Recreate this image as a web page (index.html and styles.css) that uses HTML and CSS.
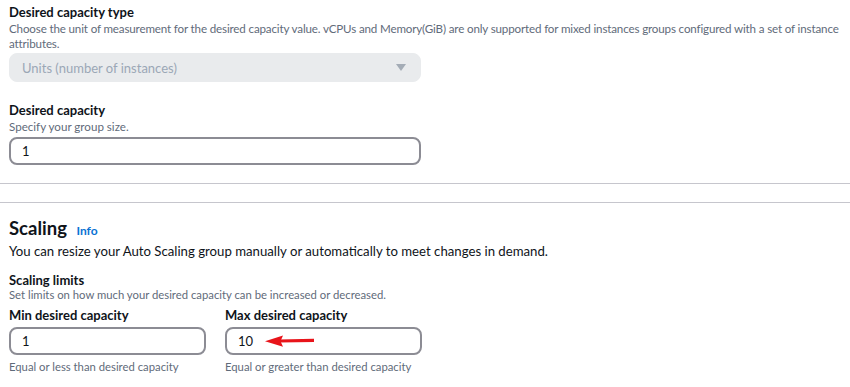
FILE: index.html
```html
<!DOCTYPE html>
<html lang="en">
<head>
  <meta charset="UTF-8">
  <title>Auto Scaling group size</title>
  <link rel="stylesheet" href="styles.css">
</head>
<body>
  <section class="panel panel-top">
    <div class="field">
      <div class="label">Desired capacity type</div>
      <div class="desc wide">Choose the unit of measurement for the desired capacity value. vCPUs and Memory(GiB) are only supported for mixed instances groups configured with a set of instance attributes.</div>
      <div class="select disabled">
        <span>Units (number of instances)</span>
        <span class="caret"></span>
      </div>
    </div>

    <div class="field field-capacity">
      <div class="label">Desired capacity</div>
      <div class="desc">Specify your group size.</div>
      <div class="input">1</div>
    </div>
  </section>

  <section class="panel panel-bottom">
    <h2>Scaling <a href="#" class="info">Info</a></h2>
    <p class="lead">You can resize your Auto Scaling group manually or automatically to meet changes in demand.</p>

    <div class="label">Scaling limits</div>
    <div class="desc small">Set limits on how much your desired capacity can be increased or decreased.</div>

    <div class="limits">
      <div class="limit">
        <div class="label">Min desired capacity</div>
        <div class="input">1</div>
        <div class="hint">Equal or less than desired capacity</div>
      </div>
      <div class="limit">
        <div class="label">Max desired capacity</div>
        <div class="input marked">10
          <svg class="arrow" width="52" height="14" viewBox="0 0 52 14">
            <path d="M14 5.6 L49 4.8 L49 8 L14 8.6 Z" fill="#e8141a"/>
            <path d="M0 7.2 L18 1.5 L15.5 7.2 L18 12.8 Z" fill="#e8141a"/>
          </svg>
        </div>
        <div class="hint">Equal or greater than desired capacity</div>
      </div>
    </div>
  </section>
</body>
</html>
```

FILE: styles.css
```css
body {
  margin: 0;
  background: #fff;
  color: #0f141a;
  font-family: Lato, "Noto Sans", sans-serif;
  font-size: 12px;
}

.panel {
  padding: 0 9px;
}

.panel-top {
  padding-top: 4px;
  padding-right: 0;
  padding-bottom: 18px;
  border-bottom: 1px solid #c6c6cd;
}

.panel-bottom {
  margin-top: 18px;
  padding-top: 13px;
  border-top: 1px solid #c6c6cd;
}

.field-capacity {
  margin-top: 20px;
}

.label {
  font-weight: 700;
  font-size: 13px;
  line-height: 16px;
}

.desc {
  color: #5f6b7a;
  font-size: 11.6px;
  line-height: 15px;
  margin-top: 1px;
}

.desc.wide {
  letter-spacing: -0.15px;
}

.desc.small {
  font-size: 11.3px;
  line-height: 14px;
  margin-top: 0;
}

.select,
.input {
  width: 412px;
  height: 29px;
  box-sizing: border-box;
  border-radius: 8px;
  display: flex;
  align-items: center;
  font-size: 13px;
}

.select {
  margin-top: 2px;
  padding: 0 12px;
  justify-content: space-between;
}

.select.disabled {
  background: #e9ebed;
  color: #9ba7b6;
  border: 1px solid #e9ebed;
}

.caret {
  width: 0;
  height: 0;
  border-left: 5px solid transparent;
  border-right: 5px solid transparent;
  border-top: 7px solid #a4acb6;
  margin-right: 2px;
}

.input {
  margin-top: 3px;
  height: 28px;
  border: 2px solid #8c8c94;
  color: #0f141a;
  padding: 0 11px;
}

h2 {
  margin: 0;
  font-size: 18.5px;
  line-height: 24px;
  font-weight: 700;
}

.info {
  color: #0972d3;
  font-size: 12px;
  font-weight: 700;
  text-decoration: none;
  margin-left: 5px;
}

.lead {
  margin: 0 0 12px;
  font-size: 13.2px;
  line-height: 17px;
}

.limits {
  display: flex;
  gap: 19px;
  margin-top: 5px;
}

.limit {
  width: 197px;
}

.limit .input {
  width: 197px;
  margin-top: 4px;
}

.input.marked {
  position: relative;
}

.arrow {
  position: absolute;
  left: 38px;
  top: 5px;
}

.hint {
  color: #5f6b7a;
  font-size: 11.3px;
  line-height: 14px;
  margin-top: 5px;
}
```
